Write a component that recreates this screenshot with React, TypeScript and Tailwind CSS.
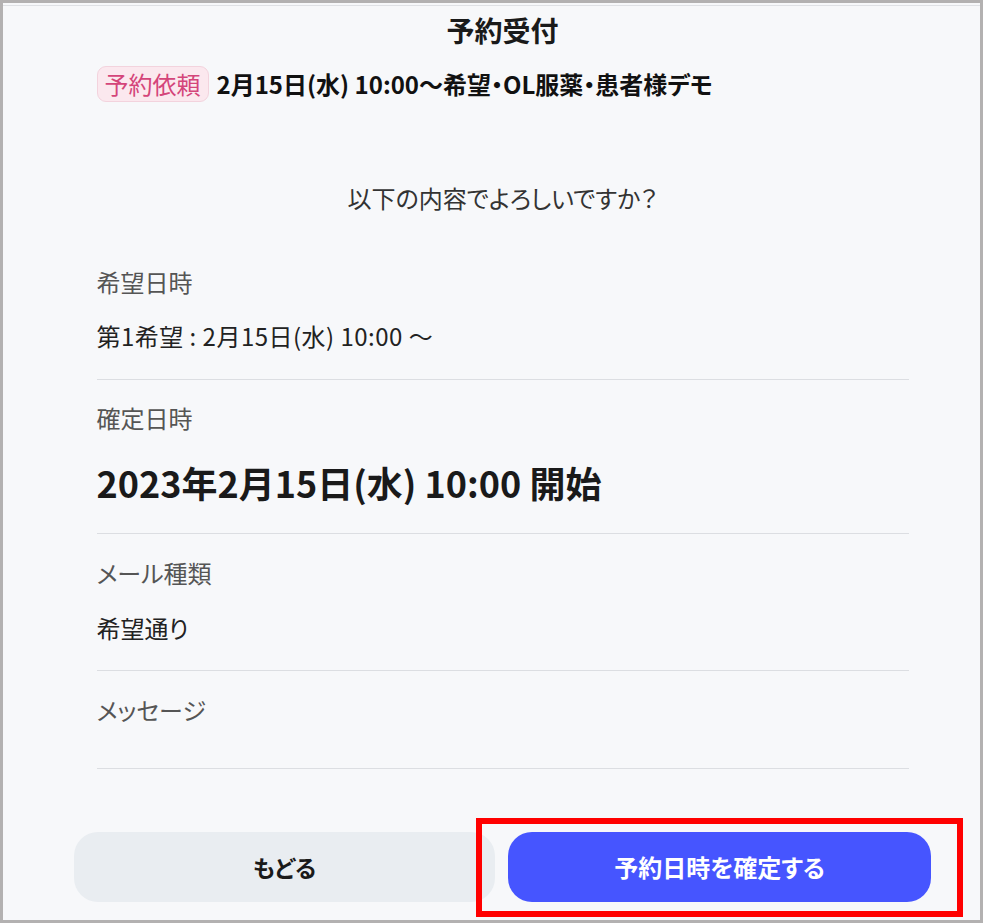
function Divider({ className = '' }: { className?: string }) {
  return <div className={`h-px w-full bg-[#dcdee2] ${className}`} />;
}

export default function App() {
  return (
    <div className="relative h-[924px] w-[985px] bg-white font-['Noto_Sans_CJK_JP','Noto_Sans',sans-serif] [font-feature-settings:'palt']">
      <div className="h-[923px] w-[983px] border-[3px] border-[#b3b1b1] bg-[#f7f8fa]">
        <div className="mt-[2px] border-t border-[#dfe1e5]" />
        <div className="ml-[71px] flex w-[857px] flex-col items-center">
          <h1 className="mt-[6px] text-[28px] font-bold leading-[36px] text-[#1a1a1a]">予約受付</h1>

          <div className="w-[812px]">
            <div className="mt-[18px] flex h-[36px] items-center gap-[8px]">
              <span className="flex h-[36px] items-center rounded-[9px] border border-[#f3d3dd] bg-[#fbe8ee] px-[7px] text-[24px] text-[#d4457a]">
                予約依頼
              </span>
              <span className="text-[24px] font-bold text-[#111]">2月15日(水) 10:00〜希望・OL服薬・患者様デモ</span>
            </div>

            <p className="mt-[81px] text-center text-[24px] leading-[30px] text-[#333]">以下の内容でよろしいですか？</p>

            <p className="mt-[54px] text-[24px] leading-[30px] text-[#555]">希望日時</p>
            <p className="mt-[24px] text-[24px] leading-[30px] tracking-[0.02em] text-[#222]">第1希望 : 2月15日(水) 10:00 〜</p>
            <Divider className="mt-[28px]" />

            <p className="mt-[23px] text-[24px] leading-[30px] text-[#555]">確定日時</p>
            <p className="mt-[25px] text-[36px] font-semibold leading-[48px] text-[#1a1a1a]">2023年2月15日(水) 10:00 開始</p>
            <Divider className="mt-[27px]" />

            <p className="mt-[24px] text-[24px] leading-[30px] text-[#555]">メール種類</p>
            <p className="mt-[25px] text-[24px] leading-[30px] text-[#222]">希望通り</p>
            <Divider className="mt-[27px]" />

            <p className="mt-[24px] text-[24px] leading-[30px] text-[#555]">メッセージ</p>
            <Divider className="mt-[43px]" />
          </div>

          <div className="mt-[63px] flex w-[857px] gap-[13px]">
            <button className="flex h-[70px] w-[421px] items-center justify-center rounded-[24px] bg-[#e9edf1] text-[23px] font-bold text-[#1a1a1a]">
              もどる
            </button>
            <button className="flex h-[70px] w-[423px] items-center justify-center rounded-[24px] bg-[#4655ff] text-[24px] font-bold text-white">
              予約日時を確定する
            </button>
          </div>
        </div>
      </div>

      <div className="absolute left-[476px] top-[818px] h-[99px] w-[487px] border-[6px] border-[#ff0000]" />
    </div>
  );
}
